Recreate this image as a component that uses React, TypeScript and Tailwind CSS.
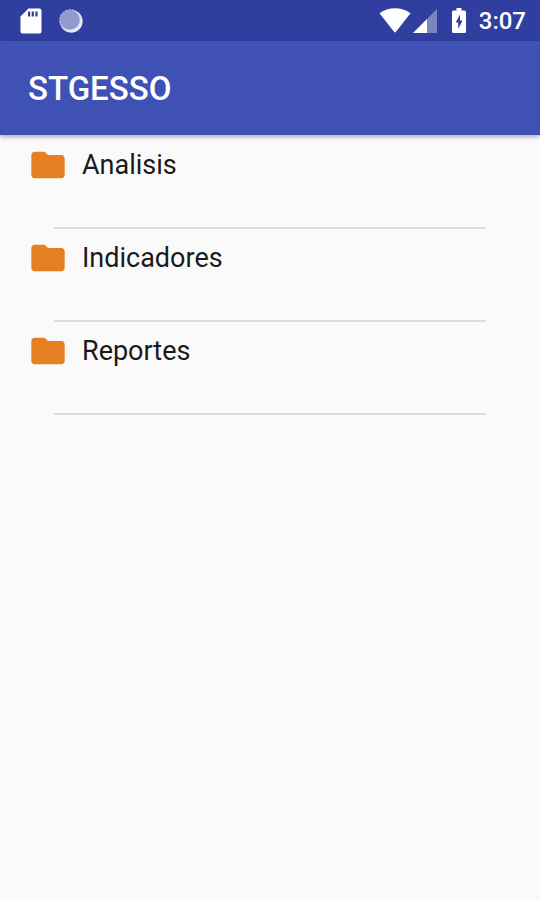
import { MdFolder } from "react-icons/md"

const folders = ["Analisis", "Indicadores", "Reportes"]

function StatusBar() {
  return (
    <div className="flex h-[41px] items-center justify-between bg-[#303f9f] pl-5 pr-3.5">
      <div className="flex items-center gap-[17px]">
        <svg viewBox="0 0 22 26" className="h-[26px] w-[22px]" role="img" aria-label="SD card">
          <path d="M8.500 .5h11a2 2 0 0 1 2 2v21a2 2 0 0 1-2 2H2.500a2 2 0 0 1-2-2V8.500z" fill="#fff" />
          <path d="M8 3.500h2.200v5H8zM11.700 3.500h2.200v5h-2.200zM15.400 3.500h2.200v5h-2.200z" fill="#303f9f" />
        </svg>
        <svg viewBox="0 0 24 24" className="h-6 w-6" role="img" aria-label="Sync">
          <circle cx="12" cy="12" r="11.500" fill="#a3a9d6" />
          <circle cx="12.500" cy="12.500" r="11" fill="#e8eaf6" />
          <circle cx="10.800" cy="10.800" r="10" fill="#9299cc" />
          <circle cx="10.800" cy="10.800" r="10" fill="none" stroke="#b9bee2" strokeDasharray="2 1.500" />
        </svg>
      </div>
      <div className="flex items-center">
        <svg viewBox="0 0 32 25" className="h-[25px] w-8" role="img" aria-label="Wifi">
          <path d="M.5 5.200C9.500-1.500 22.500-1.500 31.500 5.200L17 23.800Q16 25 15 23.800z" fill="#fff" />
        </svg>
        <svg viewBox="0 0 24 24" className="ml-0.5 h-6 w-6" role="img" aria-label="Signal">
          <path d="M24 0v24H14V10z" fill="#7c85c3" />
          <path d="M14 10v14H0z" fill="#fff" />
        </svg>
        <svg viewBox="0 0 16 26" className="ml-3.5 h-[26px] w-4" role="img" aria-label="Battery charging">
          <path
            d="M5.500 0h5v2.500h3a1.500 1.500 0 0 1 1.500 1.500v19.500a1.500 1.500 0 0 1-1.500 1.500h-11A1.500 1.500 0 0 1 1 23.500V4a1.500 1.500 0 0 1 1.500-1.500h3z"
            fill="#fff"
          />
          <path d="M9 6.500v6h2.500L7.200 21v-6.500H4.700z" fill="#303f9f" />
        </svg>
        <span className="ml-3 text-2xl font-medium text-white">3:07</span>
      </div>
    </div>
  )
}

export default function App() {
  return (
    <div className="min-h-screen bg-[#fafafa] font-['Roboto',sans-serif]">
      <StatusBar />
      <header className="flex h-[94px] items-center bg-[#3f51b5] px-7 pt-0.5 shadow-[0_2px_4px_rgba(0,0,0,0.3)]">
        <h1 className="text-[33px] font-medium text-white">STGESSO</h1>
      </header>
      <ul className="pt-px">
        {folders.map((name) => (
          <li key={name} className="flex h-[93px] flex-col justify-between">
            <button className="flex items-center gap-3.5 pl-7 pt-[9px] text-left text-[27px] text-[#1a1a1a]">
              <MdFolder className="h-10 w-10 text-[#e67e22]" />
              {name}
            </button>
            <div className="mx-[10%] h-0.5 bg-[#dcdcdc]" />
          </li>
        ))}
      </ul>
    </div>
  )
}
